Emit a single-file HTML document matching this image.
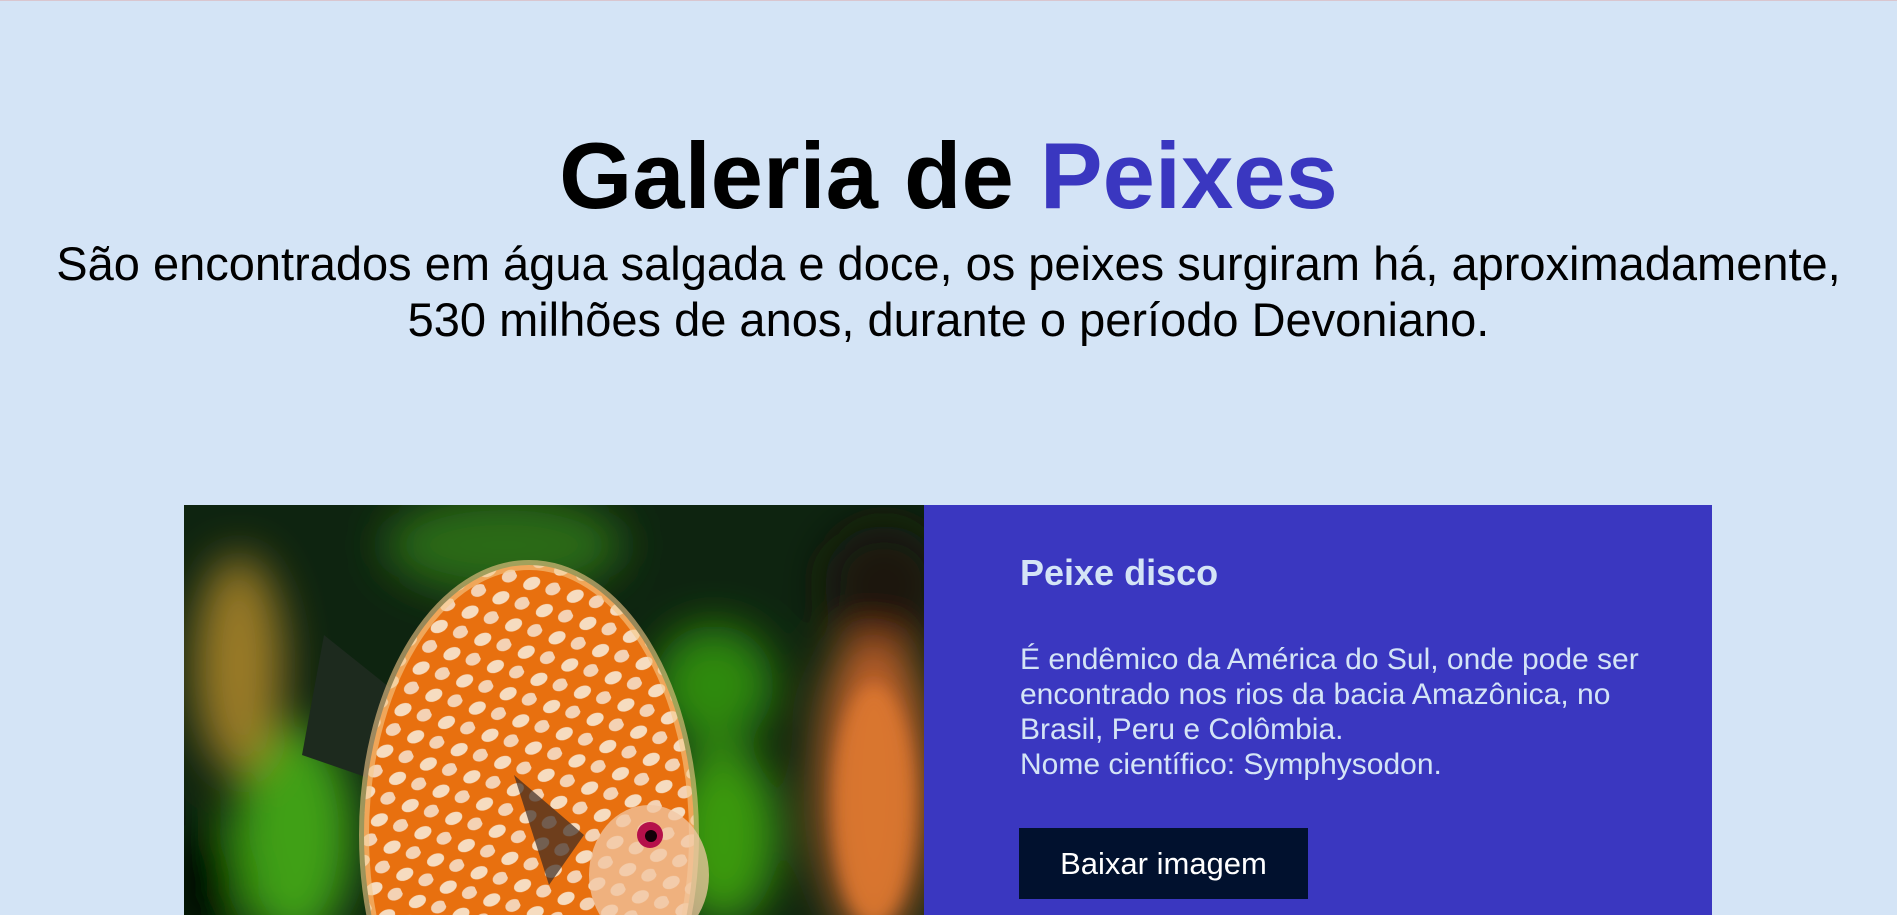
<!DOCTYPE html>
<html><head><meta charset="utf-8"><style>
html,body{margin:0;padding:0;overflow:hidden;}
body{width:1897px;height:915px;background:#d4e4f6;font-family:"Liberation Sans",Arial,sans-serif;position:relative;border-top:1px solid #d9c6cf;box-sizing:border-box;}
h1{position:absolute;left:0;width:1897px;top:120px;margin:0;text-align:center;font-size:94px;font-weight:bold;line-height:110px;color:#000;}
h1 span{color:#3a37c0;}
p.sub{position:absolute;left:0;width:1897px;top:235px;margin:0;text-align:center;font-size:47px;line-height:56px;color:#000;}
.card{position:absolute;left:184px;top:504px;width:1528px;height:410px;overflow:hidden;}
.img{position:absolute;left:0;top:0;width:740px;height:410px;overflow:hidden;background:#0c1a0a;}
.panel{position:absolute;left:740px;top:0;width:788px;height:410px;background:#3a37c0;color:#d4e4f6;}
.panel h2{position:absolute;left:96px;top:46px;margin:0;font-size:36px;line-height:44px;font-weight:bold;}
.panel p{position:absolute;left:96px;top:137px;margin:0;font-size:30px;line-height:35px;}
.btn{position:absolute;left:95px;top:323px;width:289px;height:71px;background:#01112e;color:#fff;font-size:31px;line-height:71px;text-align:center;}
</style></head><body>
<h1>Galeria de <span>Peixes</span></h1>
<p class="sub">São encontrados em água salgada e doce, os peixes surgiram há, aproximadamente,<br>530 milhões de anos, durante o período Devoniano.</p>
<div class="card">
<div class="img">
<svg width="740" height="410" viewBox="0 0 740 410">
<defs>
<filter id="b" x="-50%" y="-50%" width="200%" height="200%"><feGaussianBlur stdDeviation="22"/></filter>
<filter id="b2" x="-50%" y="-50%" width="200%" height="200%"><feGaussianBlur stdDeviation="8"/></filter>
<pattern id="st" width="34" height="30" patternUnits="userSpaceOnUse" patternTransform="rotate(-25)">
<rect width="34" height="30" fill="#e8700f"/>
<ellipse cx="10" cy="8" rx="9" ry="6" fill="#f6dcc0"/>
<ellipse cx="27" cy="22" rx="8" ry="6" fill="#f4d2b4"/>
</pattern>
</defs>
<rect width="740" height="410" fill="#0e2410"/>
<g filter="url(#b)">
<ellipse cx="110" cy="330" rx="60" ry="110" fill="#3fa012"/>
<ellipse cx="530" cy="180" rx="60" ry="60" fill="#2e8a10"/>
<ellipse cx="540" cy="330" rx="55" ry="90" fill="#3a9a10"/>
<ellipse cx="320" cy="40" rx="120" ry="50" fill="#2a6a14"/>
<ellipse cx="55" cy="160" rx="45" ry="110" fill="#9a7a28"/>
<ellipse cx="690" cy="280" rx="55" ry="160" fill="#c0622a"/>
<ellipse cx="700" cy="80" rx="60" ry="60" fill="#1a120a"/>
<ellipse cx="20" cy="380" rx="40" ry="60" fill="#050a05"/>
</g>
<g filter="url(#b2)"><ellipse cx="690" cy="300" rx="40" ry="120" fill="#e07a30" opacity=".8"/></g>
<path d="M140 130 L215 190 L205 280 L118 250 Z" fill="#1d2a1e"/>
<ellipse cx="345" cy="330" rx="165" ry="270" fill="url(#st)"/>
<ellipse cx="345" cy="330" rx="165" ry="270" fill="none" stroke="#f5c98a" stroke-width="10" opacity=".6"/>
<path d="M330 270 L365 380 L400 330 Z" fill="#3a2a22" opacity=".7"/>
<ellipse cx="465" cy="370" rx="60" ry="70" fill="#f2c7a4" opacity=".75"/>
<circle cx="466" cy="330" r="13" fill="#b5104a"/>
<circle cx="467" cy="331" r="6" fill="#150008"/>
</svg>
</div>
<div class="panel">
<h2>Peixe disco</h2>
<p>É endêmico da América do Sul, onde pode ser<br>encontrado nos rios da bacia Amazônica, no<br>Brasil, Peru e Colômbia.<br>Nome científico: Symphysodon.</p>
<div class="btn">Baixar imagem</div>
</div>
</div>
</body></html>
